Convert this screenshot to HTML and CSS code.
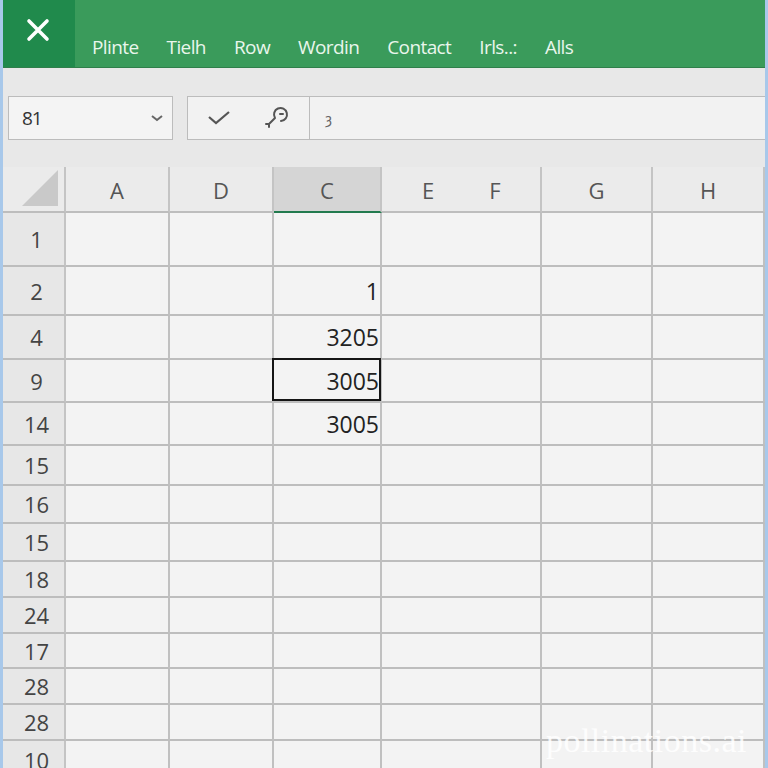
FILE: index.html
```html
<!DOCTYPE html>
<html>
<head>
<meta charset="utf-8">
<link rel="stylesheet" href="styles.css">
</head>
<body>
<div class="app">
  <header class="ribbon">
    <div class="close">
      <svg width="24" height="24" viewBox="0 0 24 24"><path d="M3 3 L21 21 M21 3 L3 21" stroke="#fff" stroke-width="3.6" stroke-linecap="round"/></svg>
    </div>
    <nav class="tabs">
      <span class="tab">Plinte</span>
      <span class="tab">Tielh</span>
      <span class="tab">Row</span>
      <span class="tab">Wordin</span>
      <span class="tab">Contact</span>
      <span class="tab">Irls..:</span>
      <span class="tab">Alls</span>
    </nav>
  </header>
  <div class="formula">
    <div class="namebox">
      <span class="ref">81</span>
      <svg class="chev" width="14" height="8" viewBox="0 0 14 8"><path d="M2 2 L7 6 L12 2" fill="none" stroke="#666" stroke-width="2"/></svg>
    </div>
    <div class="tools">
      <svg width="24" height="16" viewBox="0 0 24 16"><path d="M2 7 L9 13 L22 2" fill="none" stroke="#555" stroke-width="2.2"/></svg>
      <svg width="26" height="26" viewBox="0 0 26 26"><path d="M12 13 A6.5 6.5 0 1 1 18 16 M17 9 L20 9 M12 13 L6 19 M6 19 L3 19 M6 19 L6 22" fill="none" stroke="#555" stroke-width="2" stroke-linecap="round"/></svg>
    </div>
    <div class="input"><span class="fx">ȝ</span></div>
  </div>
  <div class="sheet">
    <div class="hd corner"><svg width="36" height="36" viewBox="0 0 36 36"><polygon points="36,0 36,36 0,36" fill="#c9c9c9"/></svg></div>
    <div class="hd">A</div>
    <div class="hd">D</div>
    <div class="hd active">C</div>
    <div class="hd split"><span>E</span><span>F</span></div>
    <div class="hd">G</div>
    <div class="hd">H</div>

    <div class="rh">1</div><div class="c"></div><div class="c"></div><div class="c"></div><div class="c"></div><div class="c"></div><div class="c"></div>
    <div class="rh">2</div><div class="c"></div><div class="c"></div><div class="c num">1</div><div class="c"></div><div class="c"></div><div class="c"></div>
    <div class="rh">4</div><div class="c"></div><div class="c"></div><div class="c num">3205</div><div class="c"></div><div class="c"></div><div class="c"></div>
    <div class="rh">9</div><div class="c"></div><div class="c"></div><div class="c num sel">3005</div><div class="c"></div><div class="c"></div><div class="c"></div>
    <div class="rh">14</div><div class="c"></div><div class="c"></div><div class="c num">3005</div><div class="c"></div><div class="c"></div><div class="c"></div>
    <div class="rh">15</div><div class="c"></div><div class="c"></div><div class="c"></div><div class="c"></div><div class="c"></div><div class="c"></div>
    <div class="rh">16</div><div class="c"></div><div class="c"></div><div class="c"></div><div class="c"></div><div class="c"></div><div class="c"></div>
    <div class="rh">15</div><div class="c"></div><div class="c"></div><div class="c"></div><div class="c"></div><div class="c"></div><div class="c"></div>
    <div class="rh">18</div><div class="c"></div><div class="c"></div><div class="c"></div><div class="c"></div><div class="c"></div><div class="c"></div>
    <div class="rh">24</div><div class="c"></div><div class="c"></div><div class="c"></div><div class="c"></div><div class="c"></div><div class="c"></div>
    <div class="rh">17</div><div class="c"></div><div class="c"></div><div class="c"></div><div class="c"></div><div class="c"></div><div class="c"></div>
    <div class="rh">28</div><div class="c"></div><div class="c"></div><div class="c"></div><div class="c"></div><div class="c"></div><div class="c"></div>
    <div class="rh">28</div><div class="c"></div><div class="c"></div><div class="c"></div><div class="c"></div><div class="c"></div><div class="c"></div>
    <div class="rh">10</div><div class="c"></div><div class="c"></div><div class="c"></div><div class="c"></div><div class="c"></div><div class="c"></div>
  </div>
  <div class="watermark">pollinations.ai</div>
</div>
</body>
</html>
```

FILE: styles.css
```css
* { box-sizing: border-box; }
html, body { margin: 0; padding: 0; }
body {
  width: 768px;
  height: 768px;
  overflow: hidden;
  font-family: "Open Sans", "Noto Sans", sans-serif;
  background: #e8e8e8;
}
.app {
  position: relative;
  width: 768px;
  height: 768px;
  overflow: hidden;
  border-left: 3px solid #a8c8ea;
  border-right: 3px solid #a8c8ea;
  background: #e8e8e8;
}
.ribbon {
  display: flex;
  height: 68px;
  background: #3a9b5b;
  border-bottom: 1px solid #2f7f4a;
  margin-left: -3px;
}
.close {
  width: 75px;
  height: 67px;
  background: #208a4c;
  display: flex;
  align-items: center;
  justify-content: center;
  padding-bottom: 8px;
}
.tabs {
  display: flex;
  align-items: center;
  gap: 28px;
  padding-left: 17px;
  padding-top: 26px;
  color: #e9f6ec;
  font-size: 19px;
  font-weight: 500;
  letter-spacing: -0.6px;
}
.formula {
  display: flex;
  align-items: stretch;
  height: 99px;
  padding-top: 28px;
  padding-bottom: 27px;
  padding-left: 5px;
}
.namebox {
  width: 165px;
  display: flex;
  align-items: center;
  justify-content: space-between;
  background: #f4f4f4;
  border: 1.5px solid #bcbcbc;
  padding: 0 8px 0 13px;
  font-size: 19px;
  color: #333;
}
.namebox .ref { letter-spacing: -1px; }
.tools {
  width: 123px;
  margin-left: 14px;
  display: flex;
  align-items: center;
  justify-content: space-between;
  padding: 0 20px 0 19px;
  background: #f2f2f2;
  border: 1.5px solid #bcbcbc;
}
.input {
  flex: 1;
  display: flex;
  align-items: center;
  padding-left: 15px;
  background: #f2f2f2;
  border-top: 1.5px solid #bcbcbc;
  border-bottom: 1.5px solid #bcbcbc;
  color: #666;
  font-size: 14px;
}
.sheet {
  display: grid;
  grid-template-columns: 63px 104px 104px 108px 160px 111px 112px;
  grid-template-rows: 46px 54px 49px 44px 43px 43px 40px 38px 38px 36px 36px 35px 36px 36px 40px;
}
.hd {
  background: #ebebeb;
  border-right: 2px solid #c4c4c4;
  border-bottom: 2px solid #bdbdbd;
  display: flex;
  align-items: center;
  justify-content: center;
  font-size: 22px;
  color: #555;
  padding-top: 2px;
}
.hd.corner {
  align-items: flex-start;
  justify-content: flex-start;
  padding: 3px 0 0 19px;
}
.hd.active {
  background: #d5d5d5;
  border-bottom: 2px solid #227a4e;
}
.hd.split {
  justify-content: flex-start;
  gap: 55px;
  padding-left: 40px;
}
.rh {
  background: #e7e7e7;
  border-right: 2px solid #c4c4c4;
  border-bottom: 2px solid #bdbdbd;
  display: flex;
  align-items: center;
  justify-content: center;
  padding-left: 6px;
  font-size: 22px;
  color: #444;
}
.c {
  background: #f3f3f3;
  border-right: 2px solid #c0c0c0;
  border-bottom: 2px solid #bdbdbd;
}
.c.num {
  display: flex;
  align-items: center;
  justify-content: flex-end;
  padding-right: 1px;
  font-size: 23px;
  color: #222;
}
.c.sel { position: relative; }
.c.sel::after {
  content: "";
  position: absolute;
  top: -2px;
  left: -2px;
  right: -1px;
  bottom: 0;
  border: 2px solid #151515;
}
.watermark {
  position: absolute;
  right: 18px;
  bottom: 10px;
  font-family: "Liberation Serif", "DejaVu Serif", serif;
  font-size: 34px;
  line-height: 1;
  color: rgba(255, 255, 255, 0.85);
  letter-spacing: 0.5px;
}
```
